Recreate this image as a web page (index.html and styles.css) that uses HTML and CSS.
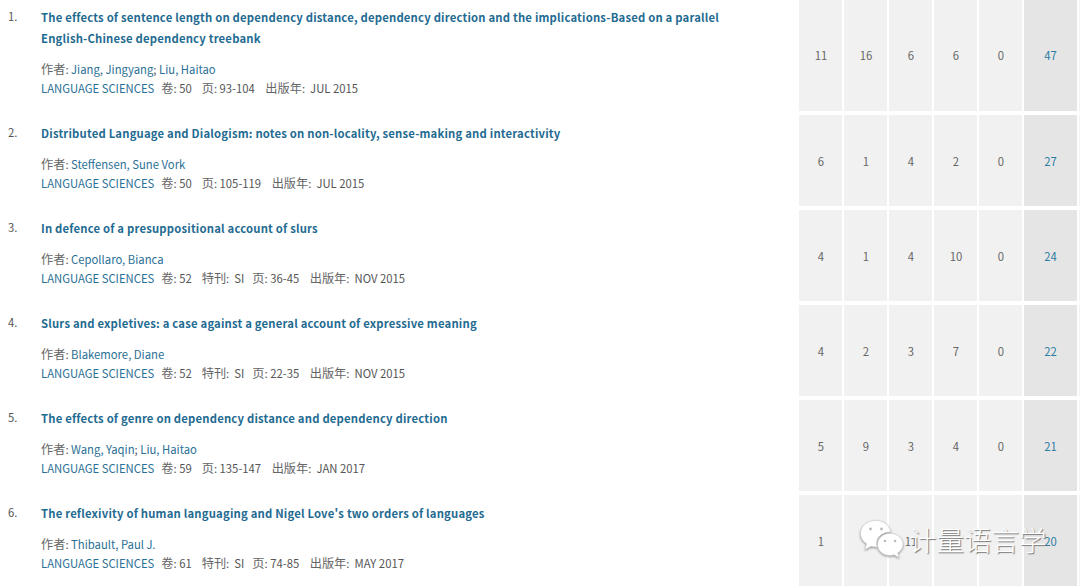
FILE: index.html
```html
<!DOCTYPE html>
<html lang="zh">
<head>
<meta charset="utf-8">
<title>Records</title>
<link rel="stylesheet" href="styles.css">
</head>
<body>
<main class="list">
  <article class="row row-tall">
    <div class="num">1.</div>
    <div class="info">
      <a class="title">The effects of sentence length on dependency distance, dependency direction and the implications-Based on a parallel English-Chinese dependency treebank</a>
      <p class="authors"><i class="zh">作者</i>: <a>Jiang, Jingyang</a>; <a>Liu, Haitao</a></p>
      <p class="source"><a>LANGUAGE SCIENCES</a><span><i class="zh">卷</i>: 50</span><span><i class="zh">页</i>: 93-104</span><span><i class="zh">出版年</i>:&nbsp; JUL 2015</span></p>
    </div>
    <div class="cell">11</div><div class="cell">16</div><div class="cell">6</div><div class="cell">6</div><div class="cell">0</div><div class="cell total">47</div><div class="edge"></div>
  </article>
  <article class="row">
    <div class="num">2.</div>
    <div class="info">
      <a class="title">Distributed Language and Dialogism: notes on non-locality, sense-making and interactivity</a>
      <p class="authors"><i class="zh">作者</i>: <a>Steffensen, Sune Vork</a></p>
      <p class="source"><a>LANGUAGE SCIENCES</a><span><i class="zh">卷</i>: 50</span><span><i class="zh">页</i>: 105-119</span><span><i class="zh">出版年</i>:&nbsp; JUL 2015</span></p>
    </div>
    <div class="cell">6</div><div class="cell">1</div><div class="cell">4</div><div class="cell">2</div><div class="cell">0</div><div class="cell total">27</div><div class="edge"></div>
  </article>
  <article class="row">
    <div class="num">3.</div>
    <div class="info">
      <a class="title">In defence of a presuppositional account of slurs</a>
      <p class="authors"><i class="zh">作者</i>: <a>Cepollaro, Bianca</a></p>
      <p class="source"><a>LANGUAGE SCIENCES</a><span><i class="zh">卷</i>: 52</span><span><i class="zh">特刊</i>:&nbsp; SI</span><span class="tight"><i class="zh">页</i>: 36-45</span><span><i class="zh">出版年</i>:&nbsp; NOV 2015</span></p>
    </div>
    <div class="cell">4</div><div class="cell">1</div><div class="cell">4</div><div class="cell">10</div><div class="cell">0</div><div class="cell total">24</div><div class="edge"></div>
  </article>
  <article class="row">
    <div class="num">4.</div>
    <div class="info">
      <a class="title">Slurs and expletives: a case against a general account of expressive meaning</a>
      <p class="authors"><i class="zh">作者</i>: <a>Blakemore, Diane</a></p>
      <p class="source"><a>LANGUAGE SCIENCES</a><span><i class="zh">卷</i>: 52</span><span><i class="zh">特刊</i>:&nbsp; SI</span><span class="tight"><i class="zh">页</i>: 22-35</span><span><i class="zh">出版年</i>:&nbsp; NOV 2015</span></p>
    </div>
    <div class="cell">4</div><div class="cell">2</div><div class="cell">3</div><div class="cell">7</div><div class="cell">0</div><div class="cell total">22</div><div class="edge"></div>
  </article>
  <article class="row">
    <div class="num">5.</div>
    <div class="info">
      <a class="title">The effects of genre on dependency distance and dependency direction</a>
      <p class="authors"><i class="zh">作者</i>: <a>Wang, Yaqin</a>; <a>Liu, Haitao</a></p>
      <p class="source"><a>LANGUAGE SCIENCES</a><span><i class="zh">卷</i>: 59</span><span><i class="zh">页</i>: 135-147</span><span><i class="zh">出版年</i>:&nbsp; JAN 2017</span></p>
    </div>
    <div class="cell">5</div><div class="cell">9</div><div class="cell">3</div><div class="cell">4</div><div class="cell">0</div><div class="cell total">21</div><div class="edge"></div>
  </article>
  <article class="row">
    <div class="num">6.</div>
    <div class="info">
      <a class="title">The reflexivity of human languaging and Nigel Love's two orders of languages</a>
      <p class="authors"><i class="zh">作者</i>: <a>Thibault, Paul J.</a></p>
      <p class="source"><a>LANGUAGE SCIENCES</a><span><i class="zh">卷</i>: 61</span><span><i class="zh">特刊</i>:&nbsp; SI</span><span class="tight"><i class="zh">页</i>: 74-85</span><span><i class="zh">出版年</i>:&nbsp; MAY 2017</span></p>
    </div>
    <div class="cell">1</div><div class="cell"></div><div class="cell">11</div><div class="cell"></div><div class="cell"></div><div class="cell total">20</div><div class="edge"></div>
  </article>
</main>
<div class="mark">
  <svg class="mark-icon" width="44" height="39" viewBox="0 0 44 39" aria-hidden="true">
    <path class="bubble" d="M16 .5C7.400.5.500 6.300.500 13.500c0 4.300 2.400 7.900 6.100 10.300L5 29.500l6.200-3.200c1.500.4 3.100.7 4.800.7h1.200c-.5-1.100-.7-2.300-.7-3.500 0-6.500 5.900-11.500 13-11.500h1.400C29.500 5.100 23.300.5 16 .5z"/>
    <path class="bubble" d="M30 13.500c-7 0-12.500 4.900-12.500 11s5.500 11 12.500 11c1.500 0 2.900-.2 4.200-.7l4.800 3-1.300-4.900c3.300-2 5.300-5.100 5.300-8.400 0-6.100-5.500-11-13-11z"/>
    <circle class="eye" cx="10.500" cy="9" r="1.400"/><circle class="eye" cx="21.500" cy="9" r="1.400"/>
    <circle class="eye" cx="25" cy="21" r="1.300"/><circle class="eye" cx="35" cy="21" r="1.300"/>
  </svg>
  <span class="mark-text">计量语言学</span>
</div>
</body>
</html>
```
FILE: styles.css
```css
* { box-sizing: border-box; }
html, body { margin: 0; padding: 0; height: 588px; overflow: hidden; background: #fff; }
body {
  position: relative;
  font-family: "Noto Sans CJK SC", "Noto Sans", sans-serif;
  font-size: 11.300px;
  color: #555;
}
.list { display: flex; flex-direction: column; gap: 4px; margin-top: -1px; }
.row {
  display: grid;
  grid-template-columns: 41px 758px 45px 45px 45px 45px 45px 55px 1fr;
  height: 91px;
}
.row-tall { height: 112px; }
.num { padding: 10px 0 0 8px; line-height: 14px; color: #555; }
.info { padding: 8px 50px 0 0; }
a { color: #2b7096; }
.zh { font-style: normal; font-size: 12.200px; line-height: 1; color: #666; }
.title {
  display: block;
  font-weight: 700;
  line-height: 21px;
  letter-spacing: .19px;
  color: #1f6b92;
}
.authors, .source { margin: 0; line-height: 19px; }
.authors { margin-top: 11px; }
.source span { margin-left: 10px; }
.source span:first-of-type { margin-left: 7px; }
.source span:last-of-type { margin-left: 10.500px; }
.source .tight { margin-left: 8px; }
.cell {
  display: flex;
  align-items: center;
  justify-content: center;
  margin-right: 2px;
  padding-left: 1px;
  background: #f1f1f1;
  font-size: 11.300px;
  color: #666;
}
.total { padding-left: 0; background: #e5e5e5; color: #2b7ca3; }
.edge { background: #f3f3f3; }
.mark {
  position: absolute;
  left: 860px;
  top: 519px;
  display: flex;
  align-items: center;
}
.mark-icon { display: block; filter: drop-shadow(0 1px 1px rgba(0,0,0,.4)); }
.bubble { fill: #fff; stroke: #c8c8c8; stroke-width: .5; }
.eye { fill: #bbb; }
.mark-text {
  font-size: 27.500px;
  font-weight: 300;
  line-height: 40px;
  color: #fff;
  margin-left: 5px;
  text-shadow: 1px 1px 1px #777;
}
```
